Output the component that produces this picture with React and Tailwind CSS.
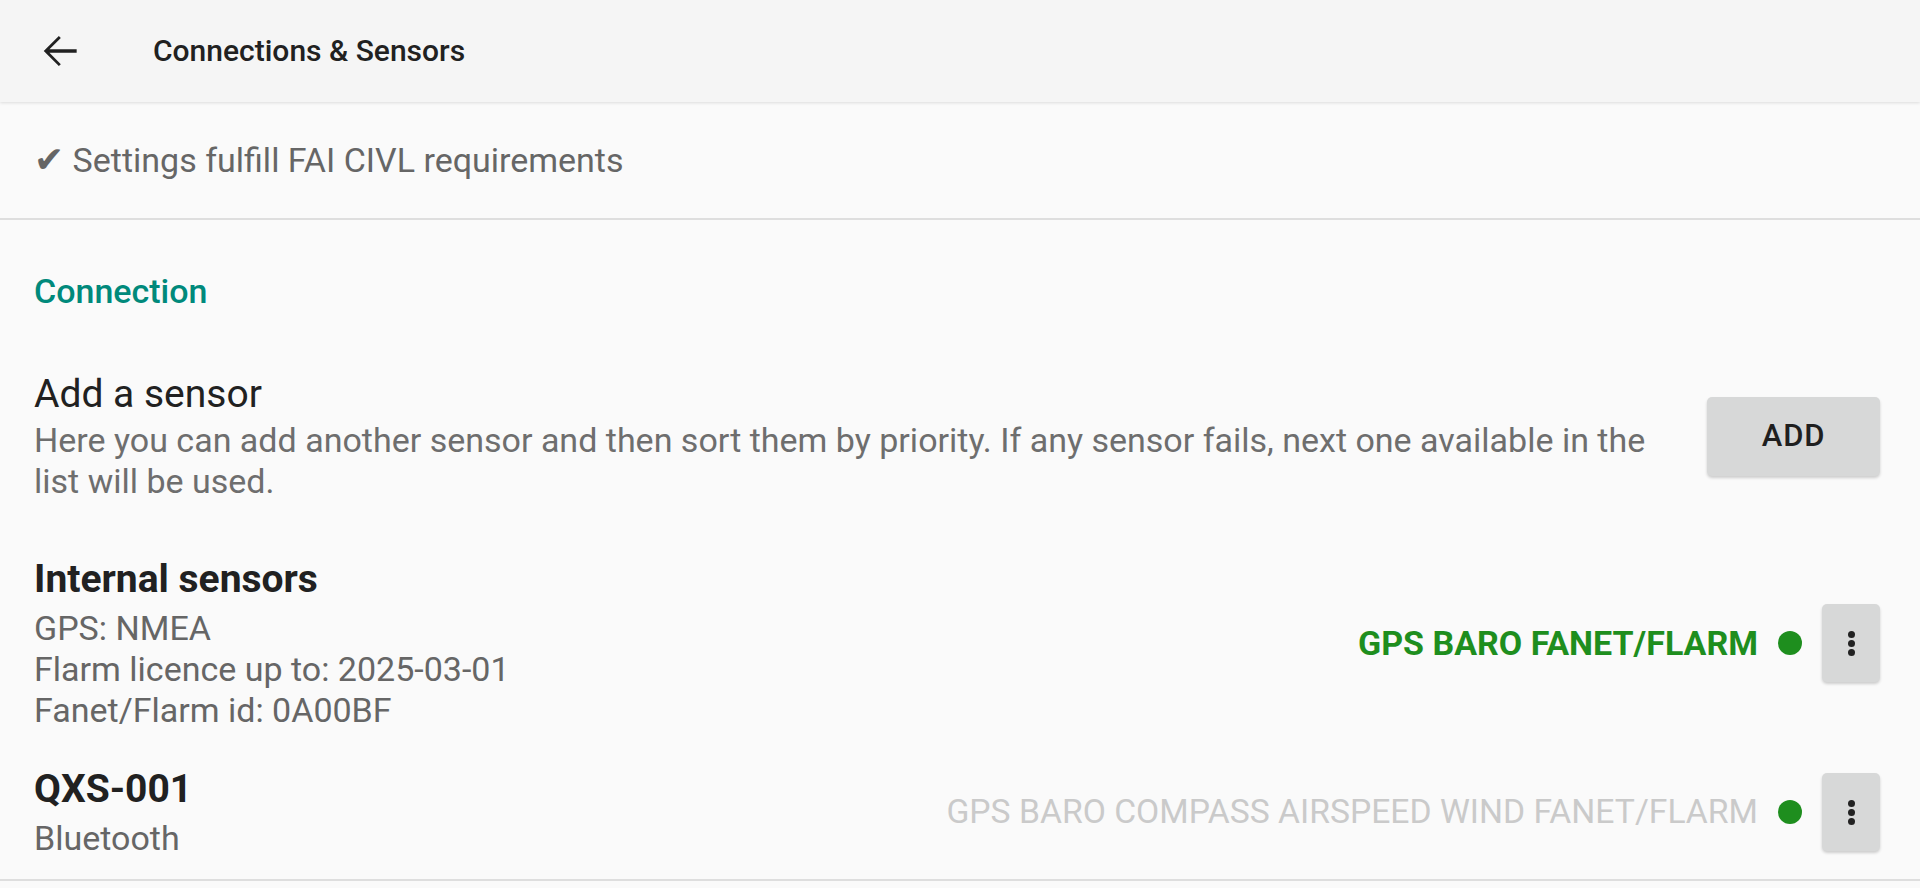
import React from 'react';

const sensors = [
  {
    name: 'Internal sensors',
    lines: ['GPS: NMEA', 'Flarm licence up to: 2025-03-01', 'Fanet/Flarm id: 0A00BF'],
    status: 'GPS BARO FANET/FLARM',
    active: true,
  },
  {
    name: 'QXS-001',
    lines: ['Bluetooth'],
    status: 'GPS BARO COMPASS AIRSPEED WIND FANET/FLARM',
    active: false,
  },
];

const MenuButton = () => (
  <button className="w-[58px] h-[78px] rounded-[5px] bg-[#d7d8d8] shadow-[0_2px_3px_rgba(0,0,0,0.18)] flex flex-col items-center justify-center gap-[2px]">
    <span className="w-[7px] h-[7px] rounded-full bg-[#222]"></span>
    <span className="w-[7px] h-[7px] rounded-full bg-[#222]"></span>
    <span className="w-[7px] h-[7px] rounded-full bg-[#222]"></span>
  </button>
);

const App = () => {
  return (
    <div className="min-h-screen bg-[#fafafa] font-['Roboto',sans-serif]">
      {/* Toolbar */}
      <header className="h-[102px] bg-[#f5f5f5] flex items-center pl-[35px] shadow-[0_1px_3px_rgba(0,0,0,0.12)] relative">
        <svg width="50" height="50" viewBox="0 0 24 24" className="text-[#212121]">
          <path fill="currentColor" d="M20 11.15H6.95l5.45-5.45-.95-.95L4.2 12l7.25 7.25.95-.95-5.45-5.45H20z" />
        </svg>
        <h1 className="ml-[68px] text-[30px] font-medium text-[#212121] leading-none">
          Connections &amp; Sensors
        </h1>
      </header>

      {/* Compliance */}
      <div className="pt-[38px] pb-[38px] px-[34px] border-b-2 border-[#dedede]">
        <p className="text-[34px] leading-[40px] text-[#666]">
          <span className="font-['DejaVu_Sans',sans-serif] text-[36px] leading-none">✔</span> Settings fulfill FAI CIVL requirements
        </p>
      </div>

      <section className="px-[34px]">
        <h2 className="pt-[51px] text-[34px] leading-[40px] font-medium text-[#00897b]">Connection</h2>

        {/* Add a sensor */}
        <div className="mt-[59px] flex items-center gap-[40px] pr-[6px]">
          <div className="flex-1">
            <div className="text-[39px] leading-[48px] text-[#212121]">Add a sensor</div>
            <p className="mt-[2px] text-[34px] leading-[41px] text-[#6e6e6e]">
              Here you can add another sensor and then sort them by priority. If any sensor fails, next one available in the list will be used.
            </p>
          </div>
          <button className="w-[173px] h-[79px] rounded-[5px] bg-[#d7d8d8] shadow-[0_2px_3px_rgba(0,0,0,0.18)] text-[31px] font-medium text-[#1f1f1f] tracking-wide">
            ADD
          </button>
        </div>

        {/* Sensors */}
        <div className="mt-[53px] flex flex-col gap-[34px] pr-[6px]">
          {sensors.map((s) => (
            <div key={s.name} className="flex items-center">
              <div className="flex-1">
                <div className="text-[39px] leading-[48px] font-bold text-[#212121]">{s.name}</div>
                <div className="mt-[5px]">
                  {s.lines.map((l) => (
                    <div key={l} className="text-[34px] leading-[41px] text-[#666]">{l}</div>
                  ))}
                </div>
              </div>
              <span
                className={
                  s.active
                    ? 'text-[34px] font-bold text-[#1e8e1e]'
                    : 'text-[33.7px] text-[#cacaca]'
                }
              >
                {s.status}
              </span>
              <span className="ml-[20px] w-[24px] h-[24px] rounded-full bg-[#1e8e1e]"></span>
              <div className="ml-[20px]">
                <MenuButton />
              </div>
            </div>
          ))}
        </div>
      </section>
      <div className="mt-[20px] border-b-2 border-[#dedede]"></div>
    </div>
  );
};

export default App;
